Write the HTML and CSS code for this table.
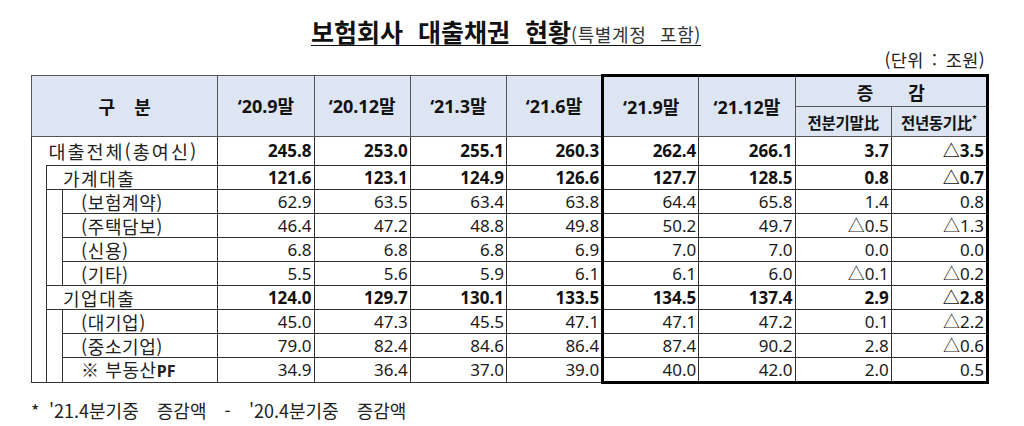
FILE: index.html
```html
<!DOCTYPE html>
<html lang="ko">
<head>
<meta charset="utf-8">
<title>보험회사 대출채권 현황</title>
<link rel="stylesheet" href="styles.css">
</head>
<body>
<div class="page">
  <h1 class="title"><span class="title-main">보험회사 대출채권 현황</span><span class="title-sub">(특별계정 포함)</span></h1>
  <div class="unit">(단위 : 조원)</div>
  <table class="grid">
    <colgroup>
      <col class="c-a"><col class="c-b"><col class="c-c">
      <col class="c-d"><col class="c-d"><col class="c-d"><col class="c-d">
      <col class="c-d"><col class="c-d"><col class="c-d"><col class="c-d">
    </colgroup>
    <thead>
      <tr class="h1">
        <th colspan="3" rowspan="2" class="gubun">구 분</th>
        <th rowspan="2">‘20.9말</th>
        <th rowspan="2">‘20.12말</th>
        <th rowspan="2">‘21.3말</th>
        <th rowspan="2">‘21.6말</th>
        <th rowspan="2" class="bx-l bx-t">‘21.9말</th>
        <th rowspan="2" class="bx-t">‘21.12말</th>
        <th colspan="2" class="bx-t bx-r inc">증 감</th>
      </tr>
      <tr class="h2">
        <th class="sub">전분기말比</th>
        <th class="sub bx-r">전년동기比<sup>*</sup></th>
      </tr>
    </thead>
    <tbody>
      <tr class="r-total">
        <td rowspan="10" class="cell-a"></td>
        <td colspan="2" class="lbl lbl-total">대출전체(총여신)</td>
        <td class="num b">245.8</td><td class="num b">253.0</td><td class="num b">255.1</td><td class="num b">260.3</td>
        <td class="num b bx-l">262.4</td><td class="num b">266.1</td><td class="num b">3.7</td><td class="num b bx-r">△3.5</td>
      </tr>
      <tr>
        <td colspan="2" class="lbl lbl-l2">가계대출</td>
        <td class="num b">121.6</td><td class="num b">123.1</td><td class="num b">124.9</td><td class="num b">126.6</td>
        <td class="num b bx-l">127.7</td><td class="num b">128.5</td><td class="num b">0.8</td><td class="num b bx-r">△0.7</td>
      </tr>
      <tr>
        <td rowspan="4" class="cell-b"></td>
        <td class="lbl lbl-l3">(보험계약)</td>
        <td class="num">62.9</td><td class="num">63.5</td><td class="num">63.4</td><td class="num">63.8</td>
        <td class="num bx-l">64.4</td><td class="num">65.8</td><td class="num">1.4</td><td class="num bx-r">0.8</td>
      </tr>
      <tr class="dash">
        <td class="lbl lbl-l3">(주택담보)</td>
        <td class="num">46.4</td><td class="num">47.2</td><td class="num">48.8</td><td class="num">49.8</td>
        <td class="num bx-l">50.2</td><td class="num">49.7</td><td class="num">△0.5</td><td class="num bx-r">△1.3</td>
      </tr>
      <tr class="dash">
        <td class="lbl lbl-l3">(신용)</td>
        <td class="num">6.8</td><td class="num">6.8</td><td class="num">6.8</td><td class="num">6.9</td>
        <td class="num bx-l">7.0</td><td class="num">7.0</td><td class="num">0.0</td><td class="num bx-r">0.0</td>
      </tr>
      <tr class="dash">
        <td class="lbl lbl-l3">(기타)</td>
        <td class="num">5.5</td><td class="num">5.6</td><td class="num">5.9</td><td class="num">6.1</td>
        <td class="num bx-l">6.1</td><td class="num">6.0</td><td class="num">△0.1</td><td class="num bx-r">△0.2</td>
      </tr>
      <tr>
        <td colspan="2" class="lbl lbl-l2">기업대출</td>
        <td class="num b">124.0</td><td class="num b">129.7</td><td class="num b">130.1</td><td class="num b">133.5</td>
        <td class="num b bx-l">134.5</td><td class="num b">137.4</td><td class="num b">2.9</td><td class="num b bx-r">△2.8</td>
      </tr>
      <tr>
        <td rowspan="3" class="cell-b"></td>
        <td class="lbl lbl-l3">(대기업)</td>
        <td class="num">45.0</td><td class="num">47.3</td><td class="num">45.5</td><td class="num">47.1</td>
        <td class="num bx-l">47.1</td><td class="num">47.2</td><td class="num">0.1</td><td class="num bx-r">△2.2</td>
      </tr>
      <tr class="dash">
        <td class="lbl lbl-l3">(중소기업)</td>
        <td class="num">79.0</td><td class="num">82.4</td><td class="num">84.6</td><td class="num">86.4</td>
        <td class="num bx-l">87.4</td><td class="num">90.2</td><td class="num">2.8</td><td class="num bx-r">△0.6</td>
      </tr>
      <tr class="dash last">
        <td class="lbl lbl-l3 pf">※ 부동산<b>PF</b></td>
        <td class="num">34.9</td><td class="num">36.4</td><td class="num">37.0</td><td class="num">39.0</td>
        <td class="num bx-l bx-b">40.0</td><td class="num bx-b">42.0</td><td class="num bx-b">2.0</td><td class="num bx-r bx-b">0.5</td>
      </tr>
    </tbody>
  </table>
  <p class="note"><span class="star">*</span>'21.4분기중&nbsp; 증감액&nbsp; -&nbsp; '20.4분기중&nbsp; 증감액</p>
</div>
</body>
</html>
```

FILE: styles.css
```css
html, body {
  margin: 0;
  padding: 0;
  background: #ffffff;
}

body {
  font-family: "Noto Sans", "Noto Sans CJK KR", sans-serif;
  color: #111111;
}

.page {
  width: 958px;
  padding-left: 31px;
}

.title {
  margin: 0;
  padding-top: 16px;
  padding-right: 8px;
  height: 28px;
  line-height: 28px;
  text-align: center;
  font-weight: normal;
  text-decoration: underline;
  text-decoration-thickness: 1px;
  text-underline-offset: 3px;
  white-space: nowrap;
}

.title-main {
  font-family: "Noto Sans CJK KR", sans-serif;
  font-weight: 700;
  font-size: 25px;
  word-spacing: 8px;
  color: #111;
}

.title-sub {
  font-family: "Noto Sans CJK KR", sans-serif;
  font-size: 18px;
  color: #333;
  word-spacing: 8px;
  letter-spacing: 0.6px;
}

.unit {
  margin-top: 6px;
  height: 20px;
  line-height: 20px;
  text-align: right;
  padding-right: 4px;
  font-size: 17.5px;
  color: #222;
  font-family: "Noto Sans CJK KR", sans-serif;
  word-spacing: 3px;
  letter-spacing: 0.4px;
}

.grid {
  margin-top: 4px;
  border-collapse: collapse;
  table-layout: fixed;
  width: 958px;
  border-top: 1px solid #333;
  border-left: 1px solid #333;
  border-bottom: 1px solid #333;
}

.c-a { width: 15px; }
.c-b { width: 16px; }
.c-c { width: 155px; }
.c-d { width: 96px; }

.grid th {
  background: #dde5f3;
  border: 1px solid #555;
  font-weight: 700;
  font-size: 18px;
  line-height: 22px;
  padding: 0;
  text-align: center;
  vertical-align: middle;
  color: #111;
}

.grid .h1 th { height: 29px; }
.grid .h2 th { height: 29px; }

.grid th.gubun {
  word-spacing: 14px;
  font-family: "Noto Sans CJK KR", sans-serif;
}

.grid th.inc {
  word-spacing: 30px;
  font-family: "Noto Sans CJK KR", sans-serif;
}

.grid th.sub {
  font-size: 15.5px;
  font-family: "Noto Sans CJK KR", sans-serif;
  letter-spacing: -0.3px;
}

.grid th.sub sup {
  font-size: 10px;
  vertical-align: 6px;
  line-height: 0;
}

.grid td {
  border: 1px solid #333;
  padding: 0;
  height: 23px;
  line-height: 20px;
  font-size: 17px;
  vertical-align: middle;
  white-space: nowrap;
}

.grid tr.r-total td { height: 28px; }

.grid td.cell-a {
  border-right: none;
  border-bottom: 1px solid #333;
}

.grid td.lbl {
  font-family: "Noto Sans CJK KR", sans-serif;
  font-size: 18px;
  color: #222;
}

.grid td.lbl-total {
  border-left: none;
  padding-left: 2px;
  font-size: 18.5px;
  letter-spacing: 2px;
}

.grid td.lbl-l2 {
  padding-left: 16px;
  letter-spacing: 1.5px;
}

.grid td.lbl-l3 {
  padding-left: 18px;
  letter-spacing: 0.6px;
}

.grid td.pf {
  letter-spacing: 0.6px;
}

.grid td.pf b {
  font-family: "Noto Sans", sans-serif;
  font-weight: 700;
  font-size: 16px;
  letter-spacing: 0;
}

.grid td.num {
  text-align: right;
  padding-right: 2px;
  color: #1a1a1a;
}

.grid td.num.b {
  font-weight: 700;
  color: #111;
}

.grid tr.dash td.lbl,
.grid tr.dash td.num {
  border-top: 1px dashed #333;
}

.grid .bx-l { border-left: 3px solid #000; }
.grid .bx-r { border-right: 3px solid #000; }
.grid .bx-t { border-top: 3px solid #000; }
.grid .bx-b { border-bottom: 3px solid #000; }
.grid tr.dash td.bx-l { border-left: 3px solid #000; }
.grid tr.dash td.bx-r { border-right: 3px solid #000; }

.note {
  margin: 16px 0 0 0;
  height: 20px;
  line-height: 20px;
  font-size: 18px;
  font-family: "Noto Sans CJK KR", sans-serif;
  color: #222;
  white-space: nowrap;
  word-spacing: 4px;
}

.note .star {
  display: inline-block;
  width: 18px;
}
```
